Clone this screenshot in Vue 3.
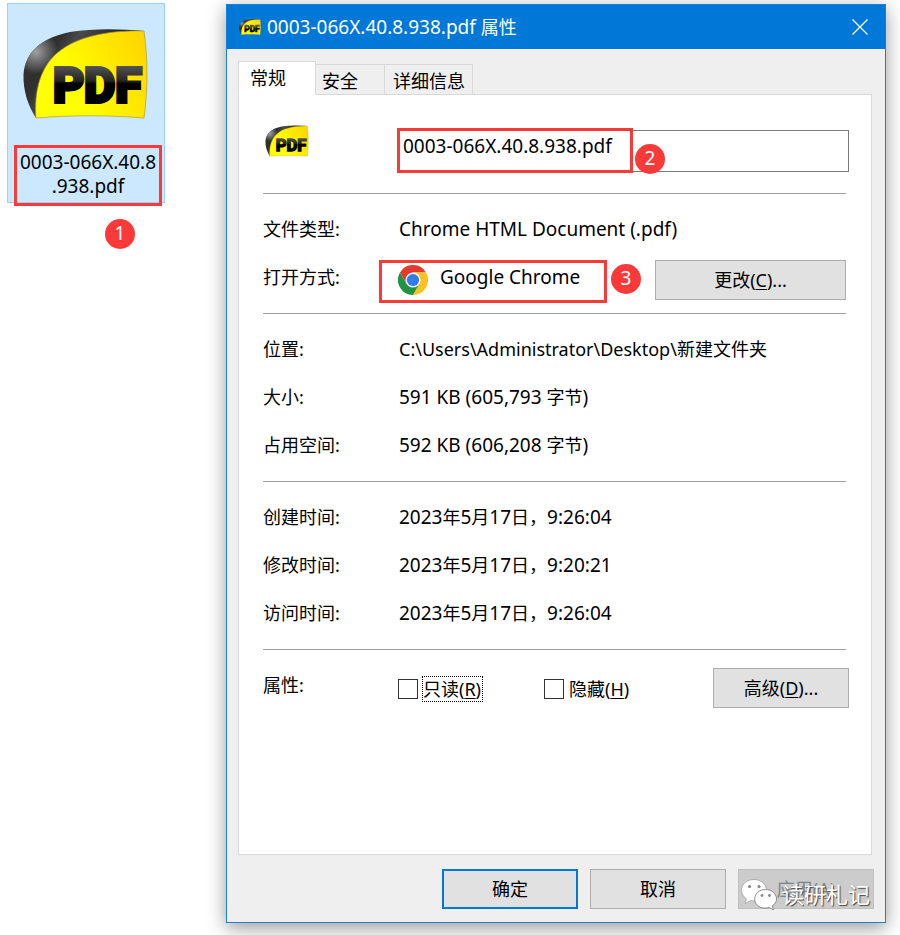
<template>
  <div class="desktop">
    <svg class="defs" width="0" height="0" aria-hidden="true">
      <defs>
        <linearGradient id="sheet" x1="0" y1="0.4" x2="1" y2="0">
          <stop offset="0.2" stop-color="#ffff00"/>
          <stop offset="1" stop-color="#ffd200"/>
        </linearGradient>
        <linearGradient id="fold" x1="0.1" y1="0.6" x2="0.6" y2="0.8">
          <stop offset="0" stop-color="#303030"/>
          <stop offset="0.25" stop-color="#4a4a4a"/>
          <stop offset="1" stop-color="#1c1c1c"/>
        </linearGradient>
        <radialGradient id="shine" cx="36" cy="52" r="22" gradientUnits="userSpaceOnUse">
          <stop offset="0" stop-color="#a0a0a0"/>
          <stop offset="1" stop-color="#a0a0a0" stop-opacity="0"/>
        </radialGradient>
        <linearGradient id="ink" x1="0" y1="64" x2="0" y2="104" gradientUnits="userSpaceOnUse">
          <stop offset="0" stop-color="#5a5a5a"/>
          <stop offset="0.42" stop-color="#242424"/>
          <stop offset="0.5" stop-color="#000"/>
        </linearGradient>
        <symbol id="pdf-icon" viewBox="23 28 125 92">
          <path d="M36 118C28 106 23 90 23.5 75C25 52 41 38 70 32C94 28 122 29 144 31L130 60L50 100Z" fill="url(#fold)"/>
          <path d="M36 118C28 106 23 90 23.5 75C25 52 41 38 70 32C94 28 122 29 144 31L130 60L50 100Z" fill="url(#shine)"/>
          <path d="M36 118C34 92 40 70 54 56C72 38 104 30 144 31C148 60 148 88 144 118C108 115 72 115 36 118Z" fill="url(#sheet)" stroke="#b49c35" stroke-width="0.7"/>
          <text x="53" y="102" font-family="Roboto, sans-serif" font-size="48" font-weight="700" fill="url(#ink)" stroke="url(#ink)" stroke-width="4">PDF</text>
        </symbol>
      </defs>
    </svg>

    <div class="shortcut-area">
      <div class="shortcut">
        <svg class="shortcut-icon"><use href="#pdf-icon"/></svg>
        <div class="shortcut-name">0003-066X.40.8<br>.938.pdf</div>
      </div>
      <span class="badge badge-one">1</span>
    </div>

    <section class="dialog">
      <header class="title-bar">
        <svg class="title-icon"><use href="#pdf-icon"/></svg>
        <h1>{{ fileName }} <span class="zh">属性</span></h1>
        <button class="close" aria-label="关闭">
          <svg width="16" height="16" viewBox="0 0 16 16"><path d="M0.5 0.5L15.5 15.5M15.5 0.5L0.5 15.5" stroke="#fff" stroke-width="1.3"/></svg>
        </button>
      </header>

      <nav class="tabs">
        <button
            v-for="tab in tabs"
            :key="tab"
            class="tab"
            :class="{ active: tab === activeTab }"
            @click="activeTab = tab">{{ tab }}</button>
      </nav>

      <main class="panel">
        <div class="file-head">
          <svg class="file-icon"><use href="#pdf-icon"/></svg>
          <div class="name-field">
            <input v-model="fileName" type="text" aria-label="文件名">
            <span class="mark mark-name"></span>
            <span class="badge badge-two">2</span>
          </div>
        </div>

        <div class="group">
          <div class="row">
            <span class="label">文件类型:</span>
            <span>Chrome HTML Document (.pdf)</span>
          </div>
          <div class="row">
            <span class="label">打开方式:</span>
            <div class="opener">
              <svg class="chrome" viewBox="0 0 48 48">
                <circle cx="24" cy="24" r="24" fill="#fff"/>
                <path d="M24 12H44.8A24 24 0 0 0 3.2 12L13.6 30Z" fill="#e33b2e"/>
                <path d="M34.4 30L24 48A24 24 0 0 0 44.8 12H24Z" fill="#fcc31e"/>
                <path d="M13.6 30L3.2 12A24 24 0 0 0 24 48L34.4 30Z" fill="#229342"/>
                <circle cx="24" cy="24" r="12" fill="#fff"/>
                <circle cx="24" cy="24" r="9.8" fill="#2f7de9"/>
              </svg>
              <span>Google Chrome</span>
              <span class="mark mark-opener"></span>
              <span class="badge badge-three">3</span>
            </div>
            <button class="btn change">更改(<u>C</u>)...</button>
          </div>
        </div>

        <div class="group">
          <div class="row">
            <span class="label">位置:</span>
            <span class="path">C:\Users\Administrator\Desktop\新建文件夹</span>
          </div>
          <div v-for="size in sizes" :key="size.label" class="row">
            <span class="label">{{ size.label }}:</span>
            <span>{{ size.value }} ({{ size.bytes }} <span class="zh">字节</span>)</span>
          </div>
        </div>

        <div class="group">
          <div v-for="time in times" :key="time.label" class="row">
            <span class="label">{{ time.label }}:</span>
            <span>2023<span class="zh">年</span>5<span class="zh">月</span>17<span class="zh">日，</span>{{ time.value }}</span>
          </div>
        </div>

        <div class="attributes">
          <span class="label">属性:</span>
          <label class="check">
            <input v-model="readOnly" type="checkbox">
            <span class="focused">只读(<u>R</u>)</span>
          </label>
          <label class="check">
            <input v-model="hidden" type="checkbox">
            <span>隐藏(<u>H</u>)</span>
          </label>
          <button class="btn advanced">高级(<u>D</u>)...</button>
        </div>
      </main>

      <footer class="actions">
        <button class="btn primary">确定</button>
        <button class="btn">取消</button>
        <button class="btn" disabled>应用(<u>A</u>)</button>
        <div class="watermark">
          <svg width="36" height="31" viewBox="0 0 36 31">
            <path d="M13 0.5C6 0.5 0.5 5 0.5 11C0.5 15 2.5 17.8 5.5 19.8L4 24.5L9.5 21.5C16 23.5 25.5 19 25.5 11.5C25.5 5 20 0.5 13 0.5Z" fill="#fff" stroke="#999" stroke-width="0.7"/>
            <path d="M24.5 10.5C18.5 10.5 13.7 14.4 13.7 20C13.7 26.5 20.5 30.7 28 28.5L32.5 31L31.3 26.8C34 25 35.5 22.8 35.5 20C35.5 14.5 30.5 10.5 24.5 10.5Z" fill="#fff" stroke="#777" stroke-width="0.8"/>
            <g fill="#888">
              <circle cx="8.5" cy="7.5" r="1.6"/><circle cx="18" cy="7.5" r="1.6"/>
              <circle cx="21" cy="16.5" r="1.4"/><circle cx="28.5" cy="16.5" r="1.4"/>
            </g>
          </svg>
          <span>读研札记</span>
        </div>
      </footer>
    </section>
  </div>
</template>


<script setup>

import { ref } from 'vue';

const tabs = ['常规', '安全', '详细信息'];

const sizes = [
  { label: '大小', value: '591 KB', bytes: '605,793' },
  { label: '占用空间', value: '592 KB', bytes: '606,208' }
];

const times = [
  { label: '创建时间', value: '9:26:04' },
  { label: '修改时间', value: '9:20:21' },
  { label: '访问时间', value: '9:26:04' }
];

let activeTab = ref('常规');
let fileName = ref('0003-066X.40.8.938.pdf');
let readOnly = ref(false);
let hidden = ref(false);

</script>

<style>

body {
  margin: 0;
  background: #fff;
}

</style>

<style scoped>

.desktop {
  display: flex;
  align-items: flex-start;
  padding: 3px 14px 12px 7px;
  font-family: "Noto Sans", "Noto Sans CJK SC", sans-serif;
  font-size: 19px;
  line-height: 24px;
  color: #000;
}

.desktop * {
  box-sizing: border-box;
}

.defs {
  position: absolute;
}

button, input {
  font: inherit;
  color: inherit;
}

.zh, .path, .label, .tab, .btn, .check {
  font-size: 18px;
}

u {
  text-decoration-thickness: 1px;
  text-underline-offset: 2px;
}

.shortcut-area {
  position: relative;
  flex: none;
  width: 158px;
  margin-right: 61px;
}

.shortcut {
  height: 200px;
  padding: 24px 2px 0 6px;
  background: #cce8ff;
  border: 1px solid #99d1ff;
}

.shortcut-icon {
  display: block;
  width: 125px;
  height: 92px;
  margin: 0 0 25px 9px;
}

.shortcut-name {
  height: 61px;
  padding-top: 2px;
  border: 3px solid #fa3939;
  text-align: center;
  white-space: nowrap;
}

/* numbered annotations */
.badge {
  position: absolute;
  width: 30px;
  height: 30px;
  border-radius: 50%;
  background: #fa3939;
  color: #fff;
  line-height: 28px;
  text-align: center;
}

.badge-one {
  top: 216px;
  left: 98px;
}

.badge-two {
  top: 14px;
  left: 237px;
}

.badge-three {
  top: 4px;
  left: 232px;
}

.mark {
  position: absolute;
  border: 3px solid #fa3939;
  pointer-events: none;
}

.mark-name {
  top: -2px;
  left: -1px;
  width: 236px;
  height: 45px;
}

.mark-opener {
  inset: 0;
}

.dialog {
  flex: 1;
  min-width: 640px;
  margin-top: 1px;
  background: #efefef;
  border: 1px solid #1a80d4;
  box-shadow: 0 5px 18px rgba(0, 0, 0, 0.4);
}

.title-bar {
  display: flex;
  align-items: center;
  height: 44px;
  padding: 0 17px 0 12px;
  background: #0078d7;
  color: #fff;
}

.title-icon {
  width: 22px;
  height: 16px;
  margin-right: 6px;
}

h1 {
  margin: 0;
  font-size: 19px;
  font-weight: 400;
}

.close {
  display: flex;
  margin-left: auto;
  padding: 0;
  border: 0;
  background: none;
}

.tabs {
  display: flex;
  align-items: flex-end;
  margin: 12px 13px -1px 11px;
}

.tab {
  height: 31px;
  margin-left: -1px;
  padding: 2px 6px 0 8px;
  border: 1px solid #d9d9d9;
  background: #efefef;
  line-height: 28px;
  text-align: left;
}

.tab:nth-child(2) {
  width: 70px;
  padding-left: 6px;
}

.tab:nth-child(3) {
  width: 89px;
}

.tab.active {
  position: relative;
  width: 78px;
  height: 34px;
  margin-left: 0;
  padding: 0 0 0 11px;
  background: #fff;
  border-bottom-color: #fff;
}

.panel {
  margin: 0 13px 0 11px;
  padding: 0 25px 145px 24px;
  background: #fff;
  border: 1px solid #d9d9d9;
}

.file-head {
  display: flex;
  align-items: flex-start;
  height: 99px;
  border-bottom: 1px solid #a0a0a0;
}

.file-icon {
  width: 44px;
  height: 32px;
  margin: 30px 89px 0 2px;
}

.name-field {
  position: relative;
  flex: 1;
  margin: 35px -3px 0 0;
}

.name-field input {
  display: block;
  width: 100%;
  height: 42px;
  padding: 0 4px 11px;
  border: 1px solid #7a7a7a;
  background: #fff;
  outline: none;
}

.group {
  padding: 11px 0 12px;
  border-bottom: 1px solid #a0a0a0;
}

.row {
  display: flex;
  align-items: center;
  height: 48px;
}

.label {
  flex: none;
  width: 136px;
}

.opener {
  position: relative;
  display: flex;
  flex: none;
  width: 228px;
  height: 43px;
  margin: 9px 0 0 -20px;
  padding: 5px 0 0 19px;
}

.chrome {
  width: 30px;
  height: 30px;
  margin-right: 12px;
}

.btn {
  flex: none;
  width: 136px;
  height: 40px;
  padding: 0;
  border: 1px solid #adadad;
  background: #e1e1e1;
}

.change {
  width: 191px;
  margin: 6px 0 0 auto;
}

.attributes {
  display: flex;
  align-items: center;
  height: 59px;
  margin-right: -3px;
  padding-top: 11px;
}

.check {
  display: flex;
  align-items: center;
  width: 146px;
  margin: 8px 0 0 -1px;
}

.check + .check {
  margin-left: 0;
}

.check input {
  appearance: none;
  width: 20px;
  height: 20px;
  margin: 0 4px 0 0;
  border: 1px solid #333;
  background: #fff;
}

.check input:checked {
  box-shadow: inset 0 0 0 4px #fff;
  background: #333;
}

.check span {
  padding: 0 1px 0 0;
  border: 1px solid transparent;
}

.check .focused {
  border: 1px dotted #000;
}

.advanced {
  margin: 6px 0 0 auto;
}

.actions {
  position: relative;
  display: flex;
  justify-content: flex-end;
  gap: 12px;
  padding: 14px 11px 13px;
}

.primary {
  border: 2px solid #0078d7;
}

.btn:disabled {
  background: #ccc;
  border-color: #bfbfbf;
  color: #838383;
}

.watermark {
  position: absolute;
  right: 15px;
  bottom: 12px;
  display: flex;
  align-items: center;
  gap: 5px;
  color: #fff;
  font-size: 22px;
  line-height: 32px;
  text-shadow: 1px 1px 1px #444;
}

</style>
